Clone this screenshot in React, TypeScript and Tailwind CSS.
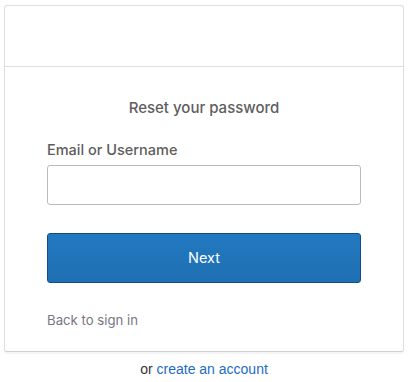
export default function App() {
  return (
    <div className="min-h-[382px] w-[408px] bg-white pt-[5px]" style={{ fontFamily: "Inter, 'Open Sans', sans-serif" }}>
      <div className="mx-[4px] rounded-[3px] border border-[#ddd] border-b-[#d0d0d0] bg-white shadow-[0_2px_0_rgba(175,175,175,0.12)]">
        <div className="h-[61px] border-b border-[#ddd]" />
        <div className="px-[42px] pb-[20px] pt-[30px]">
          <h2 className="text-center text-[15px] font-medium leading-[22px] text-[#5e5e5e]">
            Reset your password
          </h2>
          <label className="mt-[21px] block text-[14.5px] font-medium leading-[20px] text-[#5e5e5e]">
            Email or Username
          </label>
          <input
            type="text"
            className="mt-[5px] block h-[40px] w-full rounded-[3px] border border-[#bbb] bg-white px-2 outline-none"
          />
          <button
            type="button"
            className="mt-[28px] flex h-[50px] w-full items-center justify-center rounded-[3px] border border-[#0f4d84] bg-gradient-to-b from-[#2279c0] to-[#1f6fb2] text-[14.5px] text-white"
          >
            Next
          </button>
          <div className="mt-[24px]">
            <a href="#" className="text-[13.2px] leading-[20px] text-[#77777f]">
              Back to sign in
            </a>
          </div>
        </div>
      </div>
      <p className="mt-[9px] text-center text-[14px] leading-[16px] text-[#333]" style={{ fontFamily: "'Liberation Sans', Arial, sans-serif" }}>
        or <a href="#" className="text-[#1d6cc2]">create an account</a>
      </p>
    </div>
  );
}
